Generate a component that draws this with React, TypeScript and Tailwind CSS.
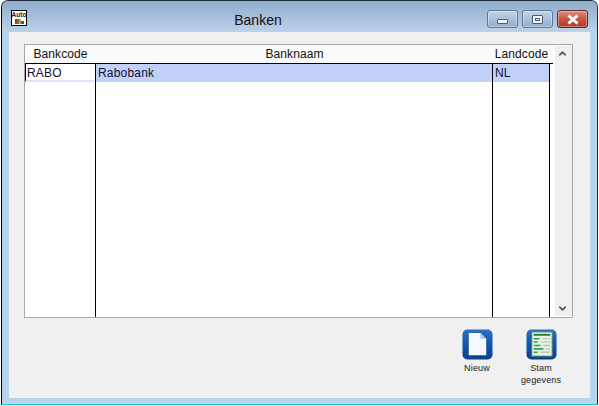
import { ChevronUp, ChevronDown } from "lucide-react";

function AppIcon() {
  return (
    <svg width="16" height="16" viewBox="0 0 16 16" className="shrink-0">
      <rect x="0.5" y="0.5" width="15" height="15" fill="#fff" stroke="#000" />
      <text x="8" y="7" textAnchor="middle" fontSize="6.5" fontWeight="700" fontFamily="Liberation Sans, sans-serif" fill="#1a1a40">Auto</text>
      <rect x="4" y="9" width="2" height="5" fill="#d02020" />
      <rect x="6" y="9" width="2" height="5" fill="#20a040" />
      <rect x="8" y="9" width="2" height="5" fill="#e0a020" />
      <rect x="10" y="11" width="3" height="3" fill="#3050c0" />
    </svg>
  );
}

function DocIcon() {
  return (
    <svg width="31" height="31" viewBox="0 0 32 32">
      <defs>
        <linearGradient id="blue" x1="0" y1="0" x2="0" y2="1">
          <stop offset="0" stopColor="#2f6fc0" />
          <stop offset="0.5" stopColor="#0f55a8" />
          <stop offset="1" stopColor="#0b418c" />
        </linearGradient>
      </defs>
      <rect x="0.5" y="0.5" width="31" height="31" rx="5" fill="url(#blue)" />
      <path d="M7 4 H19 L25 10 V27 H7 Z" fill="#f6f9fd" />
      <path d="M19 4 V10 H25 Z" fill="#a9c4e4" />
    </svg>
  );
}

function StamIcon() {
  return (
    <svg width="31" height="31" viewBox="0 0 32 32">
      <defs>
        <linearGradient id="blue2" x1="0" y1="0" x2="0" y2="1">
          <stop offset="0" stopColor="#2f6fc0" />
          <stop offset="0.5" stopColor="#0f55a8" />
          <stop offset="1" stopColor="#0b418c" />
        </linearGradient>
      </defs>
      <rect x="0.5" y="0.5" width="31" height="31" rx="5" fill="url(#blue2)" />
      <rect x="6" y="3" width="21" height="25" fill="#e6f2e6" stroke="#5c7f68" />
      <rect x="8" y="5" width="17" height="2" fill="#2d7a3e" />
      <path d="M8 10 H14 M8 13.5 H12 M8 17 H15 M8 20.5 H18 M8 24 H12" stroke="#35a048" strokeWidth="1.6" />
      <path d="M17 10 H25 M15 13.5 H25 M18 17 H25 M20 20.5 H25 M15 24 H25" stroke="#b9ccc0" strokeWidth="1.4" />
    </svg>
  );
}

function WinButton({ kind }: { kind: "min" | "max" | "close" }) {
  if (kind === "close") {
    return (
      <div className="w-[31px] h-[18px] rounded-[3px] border border-[#5e2a24] bg-gradient-to-b from-[#dc8f80] via-[#c9553f] to-[#b23a24] flex items-center justify-center shadow-[inset_0_0_0_1px_rgba(255,255,255,0.35)]">
        <svg width="14" height="11" viewBox="0 0 14 11">
          <path d="M2.5 1.5 L11.5 9.5 M11.5 1.5 L2.5 9.5" stroke="#ffffff" strokeWidth="3" />
        </svg>
      </div>
    );
  }
  return (
    <div className="w-[31px] h-[18px] rounded-[3px] border border-[#5f7890] bg-gradient-to-b from-[#c3d4e7] via-[#a9c0da] to-[#8fabc9] flex items-center justify-center shadow-[inset_0_0_0_1px_rgba(255,255,255,0.4)]">
      {kind === "min" ? (
        <div className="mt-[5px] w-[11px] h-[5px] bg-[#f2f5f9] border border-[#4a5d70] rounded-[1px]" />
      ) : (
        <div className="w-[11px] h-[9px] border border-[#4a5d70] bg-[#f2f5f9] flex items-center justify-center rounded-[1px]">
          <div className="w-[5px] h-[3px] border border-[#4a5d70]" />
        </div>
      )}
    </div>
  );
}

export default function App() {
  return (
    <div className="w-[599px] h-[406px] bg-white font-['Liberation_Sans',Arial,sans-serif] text-black overflow-hidden">
      <div className="w-[597px] h-[405px] ml-px border border-[#1d2b36] border-l-black border-b-[#18c4dc] rounded-t-[7px] bg-[#bad3ed] flex flex-col overflow-hidden">
        {/* title bar */}
        <div className="h-[31px] shrink-0 flex items-start pl-[9px] pr-[9px] pt-[9px] bg-gradient-to-b from-[#8fadcc] to-[#bcd2ea]">
          <AppIcon />
          <div className="flex-1 text-center text-[14px] leading-[20px] pl-[2px] text-[#101010]">Banken</div>
          <div className="flex gap-[4px]">
            <WinButton kind="min" />
            <WinButton kind="max" />
            <WinButton kind="close" />
          </div>
        </div>

        {/* client area */}
        <div className="ml-[7px] mr-[7px] h-[366px] bg-[#f0f0f0] flex flex-col pt-[12px] pl-[15px] pr-[17px]">
          <div className="w-[549px] h-[274px] shrink-0 border border-[#a8a8a8] bg-white flex">
            <div className="w-[528px] flex flex-col">
              {/* header */}
              <div className="h-[19px] shrink-0 flex text-[12px] tracking-[0.1px] bg-[#f9fbfd] border-b border-black text-[#111]">
                <div className="w-[71px] text-center leading-[19px]">Bankcode</div>
                <div className="w-[397px] text-center leading-[19px]">Banknaam</div>
                <div className="w-[57px] text-center leading-[19px]">Landcode</div>
              </div>
              {/* rows */}
              <div className="flex-1 flex text-[12px] tracking-[0.2px] text-[#101030]">
                <div className="w-[71px] border-r border-black">
                  <div className="h-[18px] border-l border-black border-b-2 border-b-[#dbe4fb] leading-[18px] pl-[1px] mr-[1px]">RABO</div>
                </div>
                <div className="w-[397px] border-r border-black">
                  <div className="h-[18px] bg-[#c2d0f8] leading-[19px] pl-[2px]">Rabobank</div>
                </div>
                <div className="w-[57px] border-r border-black">
                  <div className="h-[18px] bg-[#c2d0f8] leading-[19px] pl-[2px]">NL</div>
                </div>
              </div>
            </div>
            {/* scrollbar */}
            <div className="w-[17px] ml-[2px] my-[1px] pr-[2px] shrink-0 bg-[#f0f0f0] flex flex-col justify-between items-center">
              <ChevronUp size={11} strokeWidth={3.5} className="mt-[2px] text-[#555]" />
              <ChevronDown size={11} strokeWidth={3.5} className="mb-[2px] text-[#555]" />
            </div>
          </div>

          {/* buttons */}
          <div className="flex justify-end mt-[11px] text-[9px] leading-[12px] tracking-[0.15px] text-[#222] text-center">
            <div className="w-[64px] flex flex-col items-center gap-[2px]">
              <DocIcon />
              <span>Nieuw</span>
            </div>
            <div className="w-[64px] flex flex-col items-center gap-[2px]">
              <StamIcon />
              <span>Stam<br />gegevens</span>
            </div>
          </div>
        </div>
      </div>
    </div>
  );
}
